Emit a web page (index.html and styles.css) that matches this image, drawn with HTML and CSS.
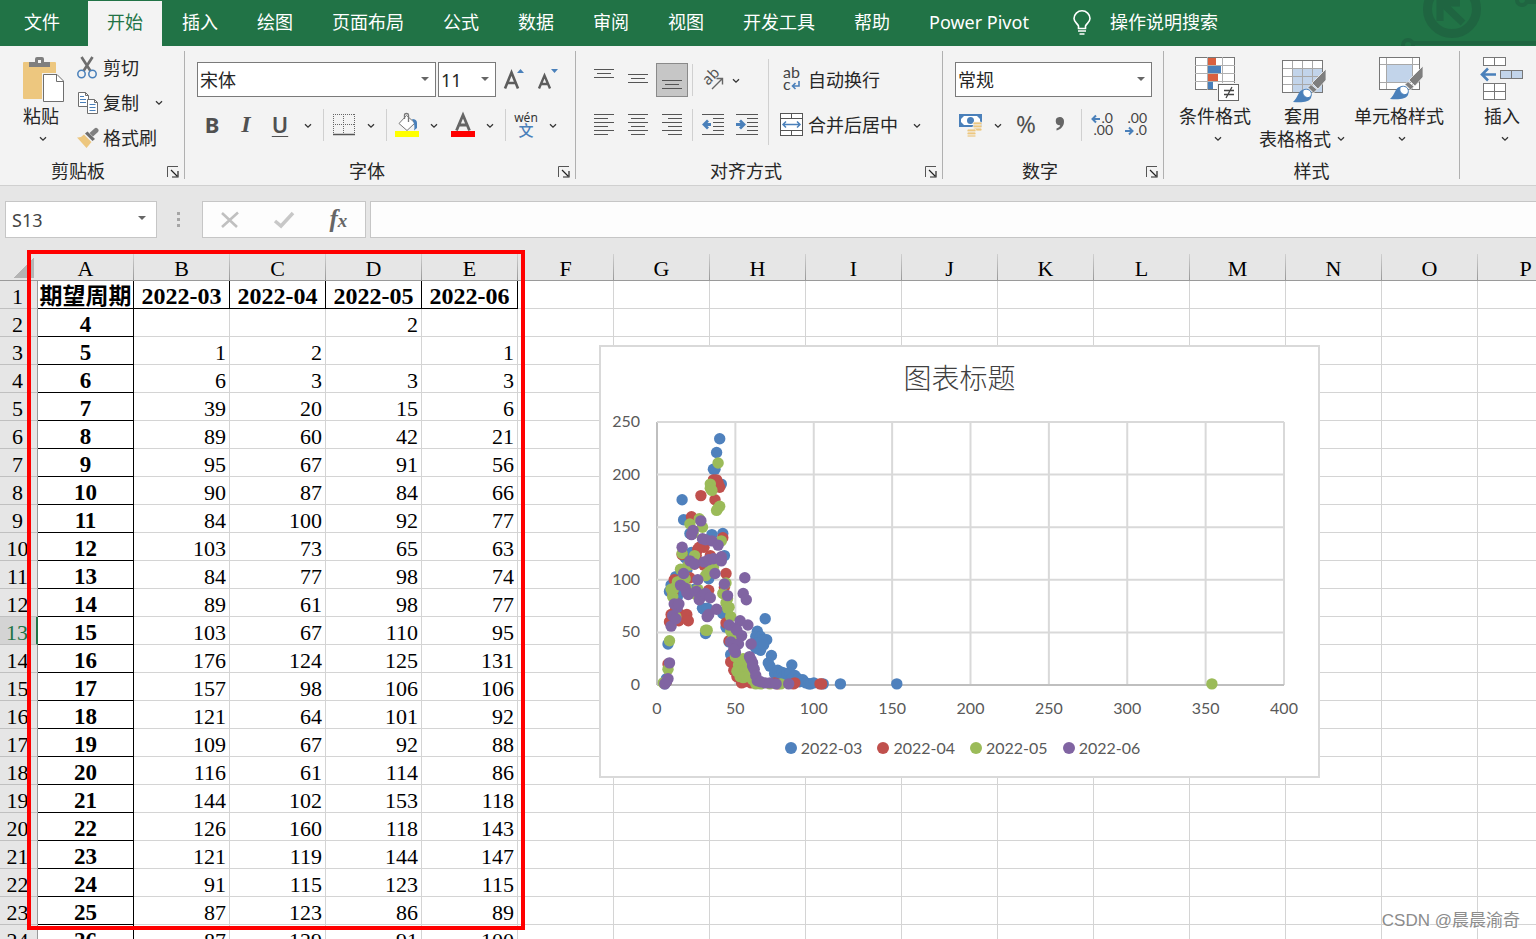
FILE: index.html
```html
<!DOCTYPE html>
<html lang="zh-CN">
<head>
<meta charset="utf-8">
<title>工作簿</title>
<link rel="stylesheet" href="styles.css">
</head>
<body>
<svg class="defs" width="0" height="0" aria-hidden="true">
  <symbol id="caret" viewBox="0 0 8 6"><path d="M1 1.2 4 4.2 7 1.2" fill="none" stroke="#333" stroke-width="1.3"/></symbol>
  <symbol id="launch" viewBox="0 0 12 12"><path d="M.5 11V.5H11" fill="none" stroke="#555"/><path d="M4 4 10 10M11 5v6H5" fill="none" stroke="#222" stroke-width="1.2"/></symbol>
  <symbol id="brush" viewBox="0 0 34 34">
    <path d="M34 0V11L26 20 20 14Z" fill="#7f7f7f" stroke="#f3f3f3" stroke-width=".8"/>
    <path d="M19 15.500 25 20.500 21.500 24 16 18.500Z" fill="#7f7f7f" stroke="#f3f3f3" stroke-width=".8"/>
    <path d="M1 33C6 29 6 21 12 20.500 17 20 21 25 19 29 17 33 10 34 1 33Z" fill="#4a80ba"/>
    <path d="M11 21.500C10 26 13 29 17 28.500 20.500 27 20 22 16 20.500 14 20 12 20.300 11 21.500Z" fill="#fff" stroke="#4a80ba"/>
  </symbol>
</svg>

<nav class="tabs">
  <button class="tab file">文件</button>
  <button class="tab active">开始</button>
  <button class="tab">插入</button>
  <button class="tab">绘图</button>
  <button class="tab">页面布局</button>
  <button class="tab">公式</button>
  <button class="tab">数据</button>
  <button class="tab">审阅</button>
  <button class="tab">视图</button>
  <button class="tab">开发工具</button>
  <button class="tab">帮助</button>
  <button class="tab">Power Pivot</button>
  <button class="tab tell">
    <svg width="18" height="25" viewBox="0 0 18 25"><path d="M5.500 18.500V16C4.500 13.500 1 12 1 8.500A8 7.700 0 0 1 17 8.500C17 12 13.500 13.500 12.500 16V18.500Z" fill="none" stroke="#fff" stroke-width="1.600"/><path d="M5 21h8M6.500 24h5" stroke="#fff" stroke-width="1.700"/></svg>
    操作说明搜索</button>
  <svg class="decor" width="140" height="46" viewBox="0 0 140 46" aria-hidden="true">
    <g fill="none" stroke="#1f6541">
      <circle cx="56" cy="9" r="24.500" stroke-width="9"/>
      <path d="M44 21V3H64M46 3 67 23" stroke-width="7"/>
      <circle cx="12" cy="45" r="5" stroke-width="4"/>
      <path d="M17 43H140" stroke-width="4"/>
      <circle cx="126" cy="0" r="5" stroke-width="4"/>
      <path d="M131 2H140" stroke-width="4"/>
    </g>
  </svg>
</nav>

<div class="ribbon">
  <section class="group clipboard">
    <div class="body">
      <button class="big paste">
        <svg width="42" height="46" viewBox="0 0 42 46"><rect y="5" width="33" height="37" rx="1" fill="#edc77f"/><path d="M6 10V5H12V2Q12 0 14 0H19Q21 0 21 2V5H27V10Z" fill="#7f7f7f"/><rect x="15" y="3" width="3" height="3" fill="#f3f3f3"/><path d="M19 16H35L42 23V46H19Z" fill="#f3f3f3"/><path d="M20.500 17.500H34L40.500 24V44.500H20.500Z" fill="#fff" stroke="#6e6e6e"/><path d="M33.500 17.500V24.500H40.500" fill="none" stroke="#6e6e6e"/></svg>
        <span>粘贴</span>
        <svg class="caret"><use href="#caret"/></svg>
      </button>
      <div class="stack">
        <button class="line"><svg width="22" height="22" viewBox="0 0 22 22"><path d="M4.500 0 13.500 14M15.500 0 6.500 14" stroke="#6e6e6e" stroke-width="2.700"/><circle cx="4.500" cy="17" r="3.700" fill="#f3f3f3" stroke="#4a80ba" stroke-width="1.500"/><circle cx="15.500" cy="17" r="3.700" fill="#f3f3f3" stroke="#4a80ba" stroke-width="1.500"/></svg>剪切</button>
        <div class="pair">
          <button class="line"><svg width="22" height="22" viewBox="0 0 22 22"><g fill="#fff" stroke="#6e6e6e"><path d="M1.500.5H8.500L11.500 3.500V14.500H1.500ZM8.500.5V3.500H11.500"/><path d="M10.500 7.500H17.500L20.500 10.500V21.500H10.500ZM17.500 7.500V10.500H20.500"/></g><path d="M3 4.500h4M3 7.500h6M3 10.500h6M12.500 12.500h6M12.500 15.500h6M12.500 18.500h6" stroke="#4a80ba"/></svg>复制</button>
          <button class="drop" aria-label="复制选项"><svg class="caret"><use href="#caret"/></svg></button>
        </div>
        <button class="line"><svg width="22" height="22" viewBox="0 0 22 22"><path d="M20.500 1.500Q22.500 3 21 5L16 9.500 12.500 6 17.500 1.500Q19 0 20.500 1.500Z" fill="#7f7f7f"/><path d="M10.500 4.500 18 12 15.500 14 8 6.500Z" fill="#6e6e6e"/><path d="M7 7.500 14.500 15 9.500 21 0 10.500Q4 11 7 7.500Z" fill="#edc77f"/></svg>格式刷</button>
      </div>
    </div>
    <div class="label"><span>剪贴板</span><button class="launch" aria-label="剪贴板设置"><svg><use href="#launch"/></svg></button></div>
  </section>

  <section class="group font">
    <div class="body rows">
      <div class="row">
        <label class="pick name"><select aria-label="字体"><option>宋体</option></select></label>
        <label class="pick size"><select aria-label="字号"><option>11</option></select></label>
        <button class="icon" aria-label="增大字号"><svg width="22" height="24" viewBox="0 0 22 24"><path d="M2 20.500 8.500 4.500 15 20.500M4.500 15H12.500" fill="none" stroke="#5c5c5c" stroke-width="2.600"/><path d="M14 5 17.500 1 21 5Z" fill="#4a80ba"/></svg></button>
        <button class="icon shrink" aria-label="减小字号"><svg width="22" height="24" viewBox="0 0 22 24"><path d="M2 20.500 7.500 7.500 13 20.500M4 16H11" fill="none" stroke="#5c5c5c" stroke-width="2.400"/><path d="M14 1H21L17.500 5Z" fill="#4a80ba"/></svg></button>
      </div>
      <div class="row">
        <button class="icon glyph b">B</button>
        <button class="icon glyph i">I</button>
        <button class="icon glyph u">U</button>
        <button class="drop" aria-label="下划线选项"><svg class="caret"><use href="#caret"/></svg></button>
        <i class="sep"></i>
        <button class="icon tight" aria-label="边框"><svg width="22" height="22" viewBox="0 0 22 22"><path d="M0 .5H22M.5 0V20M21.500 0V20M10.500 0V20M0 10.500H22" stroke="#666" stroke-dasharray="1 1"/><path d="M0 20.500H22" stroke="#555" stroke-width="1.500"/></svg></button>
        <button class="drop" aria-label="边框选项"><svg class="caret"><use href="#caret"/></svg></button>
        <i class="sep"></i>
        <button class="icon tight" aria-label="填充颜色"><svg width="24" height="24" viewBox="0 0 24 24"><rect y="18" width="24" height="6" fill="#ff0"/><path d="M11.500 2.500 20 10 12 17.500 4 10.500Z" fill="#fff" stroke="#777"/><path d="M9.500 6V2Q9.500.5 11.500.5 13.500.5 13.500 2V9" fill="none" stroke="#777" stroke-width="1.300"/><path d="M17 6Q22 6 22 10V15L19 17.500Q20.500 12 17 6Z" fill="#4a80ba"/></svg></button>
        <button class="drop" aria-label="填充颜色选项"><svg class="caret"><use href="#caret"/></svg></button>
        <button class="icon tight color" aria-label="字体颜色"><svg width="24" height="24" viewBox="0 0 24 24"><path d="M5.500 17.500 12 2 18.500 17.500M8 12H16" fill="none" stroke="#666" stroke-width="2.800"/><rect y="18" width="24" height="6" fill="red"/></svg></button>
        <button class="drop" aria-label="字体颜色选项"><svg class="caret"><use href="#caret"/></svg></button>
        <i class="sep"></i>
        <button class="icon tight phon"><span>wén</span><b>文</b></button>
        <button class="drop" aria-label="拼音选项"><svg class="caret"><use href="#caret"/></svg></button>
      </div>
    </div>
    <div class="label"><span>字体</span><button class="launch" aria-label="字体设置"><svg><use href="#launch"/></svg></button></div>
  </section>

  <section class="group align">
    <div class="body">
      <div class="rows">
        <div class="row gap">
          <button class="icon mid" aria-label="顶端对齐"><svg width="20" height="22"><path d="M0 .5H20M3 4.500H17M0 8.500H20" stroke="#555"/></svg></button>
          <button class="icon mid" aria-label="垂直居中"><svg width="20" height="22"><path d="M0 5.500H20M3 9.500H17M0 13.500H20" stroke="#555"/></svg></button>
          <button class="icon mid on" aria-label="底端对齐"><svg width="20" height="22"><path d="M0 11.500H20M3 15.500H17M0 19.500H20" stroke="#555"/></svg></button>
          <i class="sep"></i>
          <button class="icon tight" aria-label="方向"><svg width="22" height="22" viewBox="0 0 22 22"><text transform="translate(6 17) rotate(-45)" class="ab">ab</text><path d="M10 20 20 10M14.500 9.500H20.500V15.500" fill="none" stroke="#666" stroke-width="1.400"/></svg></button>
          <button class="drop" aria-label="方向选项"><svg class="caret"><use href="#caret"/></svg></button>
        </div>
        <div class="row gap">
          <button class="icon mid" aria-label="左对齐"><svg width="20" height="22"><path d="M0 .5H20M0 4.500H14M0 8.500H20M0 12.500H14M0 16.500H20M0 20.500H14" stroke="#555"/></svg></button>
          <button class="icon mid" aria-label="居中"><svg width="20" height="22"><path d="M0 .5H20M3 4.500H17M0 8.500H20M3 12.500H17M0 16.500H20M3 20.500H17" stroke="#555"/></svg></button>
          <button class="icon mid" aria-label="右对齐"><svg width="20" height="22"><path d="M0 .5H20M6 4.500H20M0 8.500H20M6 12.500H20M0 16.500H20M6 20.500H20" stroke="#555"/></svg></button>
          <i class="sep"></i>
          <button class="icon tight" aria-label="减少缩进"><svg width="22" height="22"><path d="M0 .5H22M11 4.500H22M11 8.500H22M11 12.500H22M11 16.500H22M0 20.500H22" stroke="#555"/><path d="M9 10.500H2M6 6.500 2 10.500 6 14.500" fill="none" stroke="#4a80ba" stroke-width="2.800"/></svg></button>
          <button class="icon tight next" aria-label="增加缩进"><svg width="22" height="22"><path d="M0 .5H22M11 4.500H22M11 8.500H22M11 12.500H22M11 16.500H22M0 20.500H22" stroke="#555"/><path d="M0 10.500H7M4 6.500 8 10.500 4 14.500" fill="none" stroke="#4a80ba" stroke-width="2.800"/></svg></button>
        </div>
      </div>
      <i class="sep long"></i>
      <div class="rows">
        <button class="line tall"><svg width="24" height="24" viewBox="0 0 24 24"><text x="3" y="10" class="wrap">ab</text><text x="3" y="22" class="wrap">c</text><path d="M19 13V18H13M15.500 15 12.500 18 15.500 21" fill="none" stroke="#4a80ba" stroke-width="1.600"/></svg>自动换行</button>
        <div class="pair">
          <button class="line tall"><svg width="24" height="24" viewBox="0 0 24 24"><rect x=".5" y=".5" width="22" height="22" fill="#fff" stroke="#555"/><path d="M0 5.500H23M0 17.500H23M11.500 0V5M11.500 18V23" stroke="#555"/><path d="M3 11.500H20M6 8.500 3 11.500 6 14.500M17 8.500 20 11.500 17 14.500" fill="none" stroke="#4a80ba" stroke-width="1.500"/></svg>合并后居中</button>
          <button class="drop merge" aria-label="合并选项"><svg class="caret"><use href="#caret"/></svg></button>
        </div>
      </div>
    </div>
    <div class="label"><span>对齐方式</span><button class="launch" aria-label="对齐设置"><svg><use href="#launch"/></svg></button></div>
  </section>

  <section class="group number">
    <div class="body rows">
      <label class="pick fmt"><select aria-label="数字格式"><option>常规</option></select></label>
      <div class="row">
        <button class="icon mid" aria-label="会计数字格式"><svg width="24" height="24" viewBox="0 0 24 24"><rect x="0" y="1" width="23" height="13" fill="#4a80ba"/><path d="M5 3H18L21 6V9L18 12H5L2 9V6Z" fill="#fff"/><circle cx="11.500" cy="7.500" r="3.500" fill="#4a80ba"/><g fill="#edc77f" stroke="#f3f3f3" stroke-width=".8"><rect x="14" y="9" width="9" height="3" rx="1.500"/><rect x="14" y="12" width="9" height="3" rx="1.500"/><rect x="14" y="15" width="9" height="3" rx="1.500"/><rect x="8" y="16" width="9" height="3" rx="1.500"/><rect x="8" y="19" width="9" height="3" rx="1.500"/><rect x="8" y="22" width="9" height="2" rx="1"/></g></svg></button>
        <button class="drop" aria-label="货币选项"><svg class="caret"><use href="#caret"/></svg></button>
        <button class="icon glyph pct">%</button>
        <button class="icon glyph" aria-label="千位分隔"><svg width="10" height="14" viewBox="0 0 10 14"><path d="M4.500 0A4 4 0 0 1 9 4.500C9 9 6 12.500 1.500 13.500V11.500C4 10.500 5 9.500 5.200 8.200A4 4 0 1 1 4.500 0Z" fill="#666"/></svg></button>
        <i class="sep"></i>
        <button class="icon tight" aria-label="增加小数位"><svg width="24" height="24" viewBox="0 0 24 24"><text x="23" y="10" text-anchor="end" class="dec">.0</text><text x="23" y="22" text-anchor="end" class="dec">.00</text><path d="M10 6H3M6 2.500 2.500 6 6 9.500" fill="none" stroke="#4a80ba" stroke-width="2"/></svg></button>
        <button class="icon tight next" aria-label="减少小数位"><svg width="24" height="24" viewBox="0 0 24 24"><text x="23" y="10" text-anchor="end" class="dec">.00</text><text x="23" y="22" text-anchor="end" class="dec">.0</text><path d="M1 18H8M5 14.500 8.500 18 5 21.500" fill="none" stroke="#4a80ba" stroke-width="2"/></svg></button>
      </div>
    </div>
    <div class="label"><span>数字</span><button class="launch" aria-label="数字设置"><svg><use href="#launch"/></svg></button></div>
  </section>

  <section class="group styles">
    <div class="body">
      <button class="big">
        <svg width="44" height="46" viewBox="0 0 44 46"><rect x=".5" y=".5" width="39" height="32" fill="#fff" stroke="#777"/><path d="M0 8.500H40M0 16.500H40M0 24.500H40M12.500 0V33M27.500 0V33" stroke="#b0b0b0"/><rect x="13" y="1" width="8" height="7" fill="#d9603f"/><rect x="13" y="9" width="13" height="7" fill="#4a80ba"/><rect x="13" y="17" width="10" height="7" fill="#d9603f"/><rect x="13" y="25" width="5" height="7" fill="#4a80ba"/><path d="M22 26H44V45H22Z" fill="#f3f3f3"/><rect x="23.500" y="27.500" width="20" height="16" fill="#fff" stroke="#666"/><path d="M29 33.500H39M29 37.500H39M37 30 31 41" stroke="#444" stroke-width="1.300"/></svg>
        <span>条件格式</span><svg class="caret"><use href="#caret"/></svg>
      </button>
      <button class="big wide">
        <svg width="44" height="46" viewBox="0 0 44 46"><rect x=".5" y="3.500" width="40" height="32" fill="#fff" stroke="#777"/><rect x="11" y="12" width="29" height="23" fill="#c2d4ea"/><path d="M1 11.500H40M1 19.500H40M1 27.500H40M10.500 4V35M20.500 4V35M30.500 4V35" stroke="#a8a8a8"/><use href="#brush" x="10" y="12" width="34" height="34"/></svg>
        <span>套用</span><span class="more">表格格式 <svg class="caret"><use href="#caret"/></svg></span>
      </button>
      <button class="big wide">
        <svg width="44" height="46" viewBox="0 0 44 46"><rect x=".5" y=".5" width="40" height="32" fill="#fff" stroke="#777"/><rect x="8" y="8" width="25" height="17" fill="#c2d4ea"/><path d="M1 7.500H40M1 25.500H40M7.500 1V32M33.500 1V32" stroke="#a8a8a8"/><use href="#brush" x="10" y="9" width="34" height="34"/></svg>
        <span>单元格样式</span><svg class="caret"><use href="#caret"/></svg>
      </button>
    </div>
    <div class="label"><span>样式</span></div>
  </section>

  <section class="group cells">
    <div class="body">
      <button class="big">
        <svg width="44" height="46" viewBox="0 0 44 46"><g fill="#fff" stroke="#777"><rect x="3.500" y=".5" width="22" height="8"/><path d="M14.500 0V9"/><rect x="3.500" y="26.500" width="22" height="16"/><path d="M14.500 27V42M4 34.500H25"/><rect x="20.500" y="13.500" width="22" height="8" fill="#c2d4ea"/><path d="M31.500 14V21"/></g><path d="M16 17.500H2M8 11.500 2 17.500 8 23.500" fill="none" stroke="#4a80ba" stroke-width="2.600"/></svg>
        <span>插入</span><svg class="caret"><use href="#caret"/></svg>
      </button>
    </div>
  </section>
</div>

<div class="formula">
  <label class="pick cellref"><input type="text" value="S13" aria-label="名称框"></label>
  <span class="dots"><i></i><i></i><i></i></span>
  <div class="fxbox">
    <button aria-label="取消"><svg width="18" height="18" viewBox="0 0 18 18"><path d="M1 2 16 16M17 1.500 1 16" stroke="#c0c0c0" stroke-width="2.600"/></svg></button>
    <button aria-label="输入"><svg width="20" height="18" viewBox="0 0 20 18"><path d="M1 10 7 15 19 2" fill="none" stroke="#c8c8c8" stroke-width="3.500"/></svg></button>
    <button class="fx" aria-label="插入函数">f<small>x</small></button>
  </div>
  <input class="fxinput" type="text" aria-label="编辑栏">
</div>

<main class="sheet">
  <table class="grid" id="grid"></table>
  <figure class="chart">
    <figcaption>图表标题</figcaption>
    <svg class="plot" viewBox="0 0 717 320" id="plot"></svg>
    <ul class="legend">
      <li class="s0">2022-03</li><li class="s1">2022-04</li><li class="s2">2022-05</li><li class="s3">2022-06</li>
    </ul>
  </figure>
  <div class="marker"></div>
  <p class="credit">CSDN @晨晨渝奇</p>
</main>
<script src="app.js"></script>
</body>
</html>
```
FILE: styles.css
```css
* { box-sizing: border-box; }
body {
  margin: 0;
  height: 100vh;
  display: flex;
  flex-direction: column;
  overflow: hidden;
  background: #e6e6e6;
  color: #262626;
  font: 18px/22px "Noto Sans", "Noto Sans CJK SC", sans-serif;
}
button, select, input { font: inherit; color: inherit; }
button { border: 0; padding: 0; background: none; }
svg { display: block; flex: none; overflow: visible; }
.defs { position: absolute; }

/* Tab strip */
.tabs {
  position: relative;
  flex: none;
  display: flex;
  gap: 1px;
  height: 46px;
  padding-top: 1px;
  background: #217346;
  overflow: hidden;
}
.tab { padding: 0 19px 3px; color: #fff; white-space: nowrap; z-index: 1; }
.file { padding-left: 24px; margin-right: 8px; }
.active { background: #f3f3f3; color: #217346; }
.tell { display: flex; align-items: center; gap: 19px; padding-left: 24px; }
.decor { position: absolute; top: 0; right: 0; }

/* Ribbon */
.ribbon {
  flex: none;
  display: flex;
  height: 140px;
  padding-top: 5px;
  background: #f3f3f3;
  border-bottom: 1px solid #d0d0d0;
  overflow: hidden;
}
.group {
  flex: none;
  display: flex;
  flex-direction: column;
  height: 128px;
  border-right: 1px solid #b0b0b0;
}
.body { display: flex; flex: 1; }
.label { position: relative; display: flex; justify-content: center; height: 20px; margin-bottom: -2px; line-height: 20px; }
.launch { position: absolute; right: 5px; top: 5px; }
.launch svg { width: 12px; height: 12px; }
.caret { width: 8px; height: 6px; }
.rows { display: flex; flex-direction: column; gap: 10px; padding-top: 11px; }
.row, .pair { display: flex; align-items: center; height: 35px; }
.gap .mid { margin-right: 2px; }
.gap .mid + .sep { margin-left: 2px; }
.icon { display: flex; align-items: center; justify-content: center; width: 34px; height: 34px; flex: none; }
.mid { width: 32px; }
.tight { width: 30px; }
.next { margin-left: 4px; }
.on { background: #c6c6c6; border: 1px solid #8a8a8a; }
.drop { display: flex; align-items: center; justify-content: center; width: 22px; height: 32px; }
.row .drop, .merge { padding-top: 3px; }
.tight + .drop { margin-left: 1px; }
.gap .tight + .drop { margin-left: -3px; }
.color { margin-left: 3px; }
.sep { flex: none; width: 1px; height: 32px; margin: 0 5px 0 4px; background: #d0d0d0; }
.sep.long { height: 86px; margin: 8px 8px 0 6px; }
.line { display: flex; align-items: center; gap: 4px; height: 35px; white-space: nowrap; }
.big { display: flex; flex-direction: column; align-items: center; width: 84px; padding-top: 6px; white-space: nowrap; }
.big > span { margin-top: 2px; }
.big > .caret { margin-top: 9px; }
.big .more { display: flex; align-items: center; gap: 6px; margin-top: 1px; }
.wide { width: 90px; }
.wide + .wide { width: 104px; }
.styles .big > svg:first-child { margin-left: 4px; }
.styles .big > .caret, .cells .big > .caret { margin-left: 6px; }
.glyph { color: #505050; font-size: 22px; padding-bottom: 2px; }
.b { font-weight: 700; }
.i { font-family: "Liberation Serif", serif; font-style: italic; font-weight: 700; font-size: 24px; }
.u { font-weight: 600; text-decoration: underline; text-decoration-thickness: 1px; text-underline-offset: 3px; }
.pct { font-size: 24px; }
.phon { flex-direction: column; line-height: 11px; font-size: 12px; color: #333; }
.phon b { color: #4a80ba; font-size: 15px; line-height: 14px; font-weight: 500; }
.ab { font-size: 15px; fill: #555; }
.wrap { font-family: Lato, sans-serif; font-size: 16px; fill: #444; }
.dec { font-family: Lato, sans-serif; font-size: 14px; fill: #444; }

.clipboard .label { padding-right: 28px; }
.clipboard { width: 185px; }
.paste { width: 56px; margin-left: 13px; }
.paste > svg:first-child { margin-left: 6px; }
.paste > .caret { margin-left: 4px; }
.stack { margin: -1px 0 0 8px; }
.stack .drop { margin-left: 9px; }
.font { width: 391px; }
.font .rows { padding-left: 10px; }
.align { width: 367px; }
.align .body { padding-left: 12px; }
.align .label { padding-right: 26px; }
.font .label { padding-right: 26px; }
.tall svg { margin-left: 3px; }
.merge { margin-left: 8px; }
.number { width: 221px; }
.number .rows { padding-left: 12px; }
.number .label { padding-right: 26px; }
.styles { width: 296px; }
.styles .body { padding-left: 9px; }
.cells { flex: 1; border: 0; }

/* Drop-down fields */
.pick { position: relative; display: block; height: 35px; background: #fff; border: 1px solid #7a7a7a; }
.pick select, .pick input {
  appearance: none;
  display: block;
  width: 100%;
  height: 100%;
  padding: 0 2px;
  border: 0;
  border-radius: 0;
  background: none;
  outline: 0;
}
.pick::after {
  content: "";
  position: absolute;
  right: 6px;
  top: 14px;
  border: 4px solid transparent;
  border-top-color: #666;
  border-bottom: 0;
}
.name { width: 239px; margin: 0 2px; }
.size { width: 58px; }
.size + .icon { margin-left: 1px; }
.fmt { width: 197px; }

/* Formula bar */
.formula { flex: none; display: flex; height: 68px; padding: 15px 0 0 5px; }
.formula > * { height: 37px; }
.cellref { width: 152px; border-color: #c6c6c6; color: #444; }
.cellref::after { right: 10px; }
.cellref input { padding-left: 6px; }
.dots { display: flex; flex-direction: column; justify-content: center; gap: 3px; margin: 0 22px 0 20px; }
.dots i { width: 3px; height: 3px; background: #a6a6a6; }
.fxbox { display: flex; align-items: center; justify-content: space-around; width: 164px; margin-right: 4px; background: #fdfdfd; border: 1px solid #c6c6c6; }
.fx { font: italic 700 25px/30px "Liberation Serif", serif; color: #666; }
.fx small { font-size: 19px; }
.fxinput { flex: 1; min-width: 0; padding: 0 8px; background: #fdfdfd; border: 1px solid #c6c6c6; border-right: 0; border-radius: 0; outline: 0; }

/* Worksheet */
.sheet { position: relative; flex: 1; min-height: 0; background: #fff; }
.grid {
  table-layout: fixed;
  width: 1574px;
  border-collapse: separate;
  border-spacing: 0;
  font: 22px/26px "Liberation Serif", "Noto Sans CJK SC", serif;
  color: #000;
}
.grid .head { width: 38px; }
.grid th, .grid td { height: 28px; padding: 4px 3px 0 0; overflow: hidden; white-space: nowrap; border: 0 solid #d4d4d4; border-width: 0 1px 1px 0; text-align: right; line-height: 23px; }
.grid thead th {
  height: 27px;
  padding: 3px 1px 0 0;
  font-weight: 400;
  text-align: center;
  border-right: 0;
  border-bottom-color: #9a9a9a;
  background: linear-gradient(#d0d0d0, #999) right / 1px 100% no-repeat #e6e6e6;
}
.grid tbody .num { padding: 4px 2px 0 0; background: #e6e6e6; border-right-color: #9a9a9a; border-bottom-color: #c0c0c0; font-weight: 400; text-align: center; }
.grid tbody .cur { background: #d4d4d4; color: #217346; border-right: 2px solid #217346; }
.grid .key, .grid .title { border-color: #000; text-align: center; font-weight: 700; font-size: 23px; padding-right: 0; }
.grid .title + .title { font-size: 24px; }
.grid thead .corner { background: linear-gradient(135deg, transparent 50%, #b4b4b4 50%) 14px 4px / 20px 20px no-repeat #e6e6e6; }
.marker { position: absolute; left: 27px; top: -4px; width: 498px; height: 680px; border: 4px solid #f00; }

/* Chart */
.chart { position: absolute; left: 599px; top: 91px; width: 721px; margin: 0; padding: 0 0 18px; background: #fff; border: 2px solid #d9d9d9; color: #595959; font-family: Lato, "Noto Sans CJK SC", sans-serif; }
.chart figcaption { padding: 19px 0 12px; text-align: center; font-size: 28px; line-height: 24px; font-weight: 300; color: #404040; }
.plot { width: 100%; font-size: 16px; }
.plot text { fill: #595959; }
.legend { display: flex; justify-content: center; gap: 15px; margin: 16px 0 0; padding: 0 0 0 6px; list-style: none; font-size: 16px; line-height: 20px; }
.legend li { display: flex; align-items: center; gap: 4px; }
.legend li::before { content: ""; width: 12px; height: 12px; border-radius: 50%; background: currentcolor; }
.legend .s0::before { color: #4f81bd; }
.legend .s1::before { color: #c0504d; }
.legend .s2::before { color: #9bbb59; }
.legend .s3::before { color: #8064a2; }

.credit { position: absolute; right: 16px; bottom: 7px; margin: 0; font: 17px/22px "Liberation Sans", "Noto Sans CJK SC", sans-serif; color: #8c8c8c; text-shadow: 1px 1px 1px #fff; }
```
FILE: app.js
```js
const titles = ["期望周期", "2022-03", "2022-04", "2022-05", "2022-06"];
const rows = [
  [4, "", "", 2, ""], [5, 1, 2, "", 1], [6, 6, 3, 3, 3], [7, 39, 20, 15, 6],
  [8, 89, 60, 42, 21], [9, 95, 67, 91, 56], [10, 90, 87, 84, 66], [11, 84, 100, 92, 77],
  [12, 103, 73, 65, 63], [13, 84, 77, 98, 74], [14, 89, 61, 98, 77], [15, 103, 67, 110, 95],
  [16, 176, 124, 125, 131], [17, 157, 98, 106, 106], [18, 121, 64, 101, 92], [19, 109, 67, 92, 88],
  [20, 116, 61, 114, 86], [21, 144, 102, 153, 118], [22, 126, 160, 118, 143], [23, 121, 119, 144, 147],
  [24, 91, 115, 123, 115], [25, 87, 123, 86, 89], [26, 87, 129, 91, 100]
];

// Worksheet
const letters = "ABCDEFGHIJKLMNOP".split("");
let html = '<thead><tr><th class="head corner"></th>' + letters.map(l => `<th>${l}</th>`).join("") + "</tr></thead><tbody>";
html += '<tr><th class="num">1</th>' + letters.map((l, i) => titles[i] ? `<th class="title">${titles[i]}</th>` : "<td></td>").join("") + "</tr>";
rows.forEach((row, r) => {
  const n = r + 2;
  html += `<tr><th class="num${n === 13 ? " cur" : ""}">${n}</th>`;
  html += letters.map((l, i) => i === 0 ? `<th class="key">${row[0]}</th>` : `<td>${row[i] ?? ""}</td>`).join("");
  html += "</tr>";
});
document.getElementById("grid").innerHTML = html + "</tbody>";

// Later points of each series, as [period, count]
const tail = [
  [[40,234],[38,221],[36,205],[37,205],[41,191],[35,143],[42,144],[43,123],[29,73],[30,72],[32,73],[31,49],[33,101],[42,68],[44,55],[46,41],[47,29],[50,24],[69,63],[64,51],[63,46],[66,46],[70,43],[67,43],[66,33],[62,38],[63,35],[64,40],[68,38],[73,28],[71,21],[72,18],[86,19],[75,11],[77,14],[78,9],[80,12],[81,8],[83,11],[85,11],[86,6],[88,9],[90,6],[91,3],[93,5],[95,2],[97,1],[98,1],[100,2],[106,1],[117,1],[153,1]],
  [[28,180],[36,195],[38,195],[39,192],[40,188],[37,176],[42,140],[30,131],[27,131],[34,123],[30,114],[44,106],[33,90],[43,93],[44,59],[46,42],[47,22],[49,14],[51,8],[54,2],[56,3],[60,2],[75,2],[77,1],[88,2],[87,1],[104,1],[105,1]],
  [[39,211],[34,191],[34,187],[35,185],[40,170],[39,168],[38,166],[27,158],[29,150],[41,137],[36,112],[34,109],[32,106],[31,104],[44,97],[42,87],[45,82],[44,78],[45,73],[46,74],[47,65],[47,51],[48,43],[50,27],[53,24],[55,25],[56,22],[58,22],[52,19],[54,19],[51,13],[53,13],[56,14],[58,14],[53,8],[55,7],[57,8],[59,8],[61,5],[63,1],[66,1],[72,1],[79,1],[32,52],[31,52],[354,1]],
  [[28,156],[29,139],[31,138],[35,137],[39,133],[30,117],[33,119],[36,120],[41,122],[41,118],[37,106],[27,81],[29,85],[31,87],[34,83],[32,65],[33,67],[38,72],[43,96],[45,85],[56,102],[55,87],[57,81],[53,61],[58,57],[46,57],[50,54],[51,52],[54,47],[60,39],[47,41],[49,38],[52,39],[50,31],[49,34],[59,27],[60,24],[61,21],[61,18],[62,15],[63,9],[64,4],[66,3],[69,2],[72,2],[76,1],[84,1]]
];

// Chart
const colors = ["#4f81bd", "#c0504d", "#9bbb59", "#8064a2"];
const left = 56, right = 683, top0 = 20, base = 283;
const px = v => left + v * (right - left) / 400;
const py = v => base - v * (base - top0) / 250;
let svg = "";
for (let v = 0; v <= 400; v += 50) {
  svg += `<path d="M${px(v)} ${top0}V${base}" stroke="${v ? "#d9d9d9" : "#bfbfbf"}" stroke-width="2"/>`;
  svg += `<text x="${px(v)}" y="${base + 29}" text-anchor="middle">${v}</text>`;
}
for (let v = 0; v <= 250; v += 50) {
  svg += `<path d="M${left} ${py(v)}H${right}" stroke="${v ? "#d9d9d9" : "#bfbfbf"}" stroke-width="2"/>`;
  svg += `<text x="${left - 17}" y="${py(v) + 5}" text-anchor="end">${v}</text>`;
}
tail.forEach((more, s) => {
  const points = rows.filter(r => r[s + 1] !== "").map(r => [r[0], r[s + 1]]).concat(more);
  svg += `<g fill="${colors[s]}">` + points.map(([x, y]) => `<circle cx="${px(x).toFixed(1)}" cy="${py(y).toFixed(1)}" r="5.700"/>`).join("") + "</g>";
});
document.getElementById("plot").innerHTML = svg;
```
